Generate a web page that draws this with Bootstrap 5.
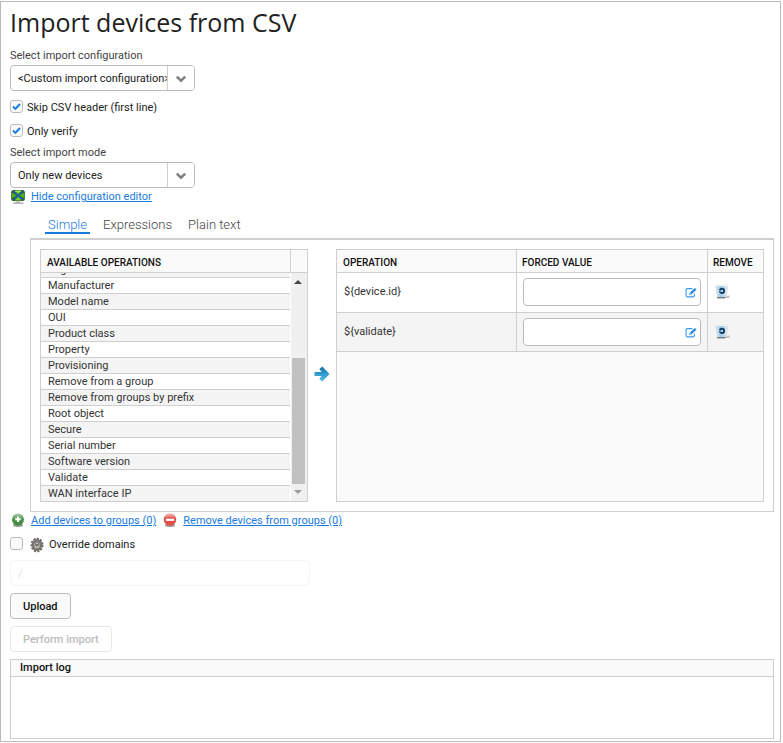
<!DOCTYPE html>
<html lang="en">
<head>
<meta charset="utf-8">
<meta name="viewport" content="width=device-width, initial-scale=1">
<title>Import devices from CSV</title>
<link href="https://cdn.jsdelivr.net/npm/bootstrap@5.3.0/dist/css/bootstrap.min.css" rel="stylesheet">
<style>
  :root { --line: #cfcfcf; --ink: #212121; --link: #1a7bdf; }
  body { font-family: Roboto, "Liberation Sans", sans-serif; font-size: 11px; line-height: 16px; color: var(--ink); background: #fff; }
  a { color: var(--link); }
  .page-frame { margin: 1px 2px 1px 0; border: 1px solid #bbb; padding: 2px 6px 2px 9px; }
  h1 { font-family: "Open Sans", sans-serif; font-size: 25px; line-height: 36px; font-weight: 400; margin-bottom: 8px; }
  .field-label { color: #444; margin-bottom: 1px; }
  .picker { width: 185px; }
  .picker select { width: 100%; height: 26px; padding: 1px 27px 0 7px; border: 1px solid #bbb; border-radius: 4px; appearance: none; background: #fff; color: var(--ink); font-size: 11px; overflow: hidden; }
  .picker-arrow { top: 1px; right: 1px; bottom: 1px; width: 27px; border-left: 1px solid var(--line); border-radius: 0 3px 3px 0; background: #fff; pointer-events: none; padding-top: 1px; }
  .check-row { gap: 4px; }
  .check-row label { padding-top: 1px; }
  .check-row .form-check-input { width: 13px; height: 13px; margin: 1px 0 0; border: 1px solid #bbb; border-radius: 3px; background-color: #fafafa; flex: none; }
  .check-row .form-check-input:checked { background-color: #fafafa; background-size: 11px 11px; background-image: url("data:image/svg+xml,%3Csvg xmlns='http://www.w3.org/2000/svg' viewBox='0 0 11 11'%3E%3Cpath d='M2 5.5l2.4 2.4L9 3' fill='none' stroke='%231a7bdf' stroke-width='2'/%3E%3C/svg%3E"); }
  .check-row .icon-label { gap: 5px; margin-left: 3px; }
  .gap-8 { margin-top: 8px; }
  .gap-7 { margin-top: 7px; }
  .gap-5 { margin-top: 5px; }
  .icon-row a { margin-left: 5px; padding-top: 2px; line-height: 14px; }
  .icon-row a + svg { margin-left: 6px; }
  .editor-tabs { margin: 12px 0 4px 35px; gap: 10px; }
  .editor-tabs button { border: 0; border-bottom: 2px solid transparent; background: none; padding: 2px 3px 0; font-size: 13px; font-weight: 300; line-height: 14px; color: #444; }
  .editor-tabs button.active { color: var(--link); border-color: var(--link); }
  .editor-pane { margin-left: 20px; border: 1px solid var(--line); border-top-width: 2px; padding: 9px; }
  .ops-box { width: 268px; height: 253px; border: 1px solid var(--line); }
  .box-head { height: 23px; border-bottom: 1px solid var(--line); background: #fafafa; font-weight: 500; color: #111; line-height: 25px; padding-left: 6px; font-size: 10px; }
  .box-head-end { width: 17px; height: 23px; border-left: 1px solid var(--line); border-bottom: 1px solid var(--line); background: #fafafa; }
  .ops-table td { height: 16px; padding: 0 0 0 7px; border-top: 1px solid var(--line); line-height: 15px; color: #333; }
  .ops-table tr:nth-child(odd) td { background: #f4f4f4; }
  .scroll-track { width: 16px; background: #f0f0f0; padding: 7px 2px 7px 0; }
  .scroll-thumb { width: 13px; height: 126px; background: #c1c1c1; margin-bottom: 6px; }
  .move-btn { width: 28px; border: 0; background: none; }
  .values-box { border: 1px solid var(--line); background: #fafafa; min-width: 0; }
  .values-table { table-layout: fixed; border-collapse: separate; border-spacing: 0; }
  .values-table th { height: 23px; padding: 4px 0 0 6px; font-size: 10px; font-weight: 500; line-height: 18px; color: #111; border-bottom: 1px solid var(--line); }
  .values-table th + th { padding-left: 5px; }
  .values-table td { padding: 5px 6px 6px; border-bottom: 1px solid var(--line); background: #fff; vertical-align: middle; color: #333; }
  .values-table tr:nth-child(even) td { background: #f4f4f4; padding-bottom: 5px; }
  .values-table th + th, .values-table td + td { border-left: 1px solid var(--line); }
  .col-forced { width: 191px; }
  .col-remove { width: 56px; }
  .values-table .op-name { padding-left: 7px; }
  .value-field { height: 28px; border: 1px solid #bbb; border-radius: 4px; background: #fff; padding-right: 3px; }
  .value-field input { border: 0; background: none; outline: 0; min-width: 0; font-size: 11px; }
  .value-field button, .values-table td > button { border: 0; background: none; padding: 0; line-height: 0; }
  .value-field button { padding-top: 1px; }
  .domain-input { width: 300px; height: 26px; border: 1px solid #f5f5f5; border-radius: 4px; background: #fefefe; color: #e4e4e4; padding: 0 7px; }
  .plain-btn { height: 26px; padding: 1px 12px 0; border: 1px solid #bbb; border-radius: 4px; background: #fafafa; font-size: 11px; font-weight: 500; line-height: 16px; color: #111; }
  .plain-btn:disabled { border-color: #e8e8e8; background: #fefefe; color: #bdbdbd; opacity: 1; }
  .log-box { border: 1px solid var(--line); height: 80px; }
  .log-box h2 { font-size: 11px; font-weight: 500; line-height: 16px; height: 17px; margin: 0; padding-left: 9px; background: #fafafa; border-bottom: 1px solid var(--line); color: #111; }
</style>
</head>
<body>
<svg width="0" height="0" class="position-absolute" aria-hidden="true">
  <defs>
    <linearGradient id="gGreen" x1="0" y1="0" x2="0" y2="1"><stop offset="0" stop-color="#a9cfa9"/><stop offset=".5" stop-color="#4b964b"/><stop offset="1" stop-color="#3f8440"/></linearGradient>
    <linearGradient id="gRed" x1="0" y1="0" x2="0" y2="1"><stop offset="0" stop-color="#f7c4c0"/><stop offset=".45" stop-color="#d9483f"/><stop offset="1" stop-color="#e2554d"/></linearGradient>
    <linearGradient id="gBlue" x1="0" y1="0" x2="0" y2="1"><stop offset="0" stop-color="#1c6d9c"/><stop offset=".5" stop-color="#2f9ad2"/><stop offset="1" stop-color="#62bbe8"/></linearGradient>
    <linearGradient id="gBin" x1="0" y1="0" x2="1" y2="0"><stop offset="0" stop-color="#dde6eb"/><stop offset=".45" stop-color="#9fcbe8"/><stop offset="1" stop-color="#e9eef1"/></linearGradient>
    <symbol id="chev" viewBox="0 0 12 8"><path d="M1.800 1.600l4.200 4 4.200-4" fill="none" stroke="#808080" stroke-width="2.600"/></symbol>
    <symbol id="edit" viewBox="0 0 12 12"><path d="M7.500 1.600H2.600Q1.100 1.600 1.100 3.100v5.300q0 1.500 1.500 1.500h5.300q1.500 0 1.500-1.500V6.800" fill="none" stroke="#3d96ec" stroke-width="1.100"/><path d="M4.300 8l.4-2.300L9.900.9l1.700 1.700-5.100 5z" fill="#2b8ae6"/><path d="M5.300 6.200l.9.900" stroke="#fff" stroke-width=".7"/></symbol>
    <symbol id="bin" viewBox="0 0 16 16"><path d="M9 14.300l6.500-.8v-2l-3.500.5z" fill="#b9b9b9"/><path d="M1.500 1h12.500l-1.800 12.500H3.500z" fill="url(#gBin)" stroke="#d9e0e4" stroke-width=".7"/><path d="M1.500 1.500H14" stroke="#f1f5f7"/><path d="M3 13.700h8.500" stroke="#777" stroke-width="1.400"/><circle cx="8" cy="6.900" r="2.100" fill="#b9def4" stroke="#123f63" stroke-width="1.900"/><path d="M5 6.500l2.200 1" stroke="#8fc0e0" stroke-width="1.100"/></symbol>
  </defs>
</svg>
<main class="page-frame">
  <h1>Import devices from CSV</h1>

  <label class="field-label d-block" for="cfg">Select import configuration</label>
  <div class="picker position-relative">
    <select id="cfg" class="d-block"><option>&lt;Custom import configuration&gt;</option></select>
    <span class="picker-arrow position-absolute d-flex align-items-center justify-content-center"><svg width="12" height="8"><use href="#chev"/></svg></span>
  </div>

  <div class="check-row d-flex gap-8"><input class="form-check-input" type="checkbox" id="skip" checked><label for="skip">Skip CSV header (first line)</label></div>
  <div class="check-row d-flex gap-7"><input class="form-check-input" type="checkbox" id="verify" checked><label for="verify">Only verify</label></div>

  <label class="field-label d-block gap-5" for="mode">Select import mode</label>
  <div class="picker position-relative">
    <select id="mode" class="d-block"><option>Only new devices</option></select>
    <span class="picker-arrow position-absolute d-flex align-items-center justify-content-center"><svg width="12" height="8"><use href="#chev"/></svg></span>
  </div>

  <div class="icon-row d-flex align-items-center">
    <svg width="16" height="16" viewBox="0 0 16 16" aria-hidden="true"><path d="M5.500 12h5v3h-5z" fill="#c9c9c9"/><path d="M3 15.200h10.500" stroke="#a8a8a8" stroke-width="1.300"/><rect x="1.200" y="2" width="13.600" height="11" rx="2.500" fill="#2c4f2b"/><path d="M4.500 2.500h7L8.500 7zM4.500 12.500h7L8.500 8z" fill="#6fd51c"/><path d="M1.800 4.500v6L7 7.500zM14.200 4.500v6L9 7.500z" fill="#49b31c"/><path d="M3 3l10 9M13 3L3 12" stroke="#235f9b" stroke-width="1.800"/><path d="M5 3.200h6" stroke="#c8f38b" stroke-width=".8"/></svg>
    <a href="#">Hide configuration editor</a>
  </div>

  <div class="editor-tabs d-flex" role="tablist">
    <button type="button" class="active" role="tab" aria-selected="true">Simple</button>
    <button type="button" role="tab">Expressions</button>
    <button type="button" role="tab">Plain text</button>
  </div>

  <section class="editor-pane d-flex">
    <div class="ops-box d-flex flex-shrink-0">
      <div class="d-flex flex-column flex-grow-1">
        <div class="box-head flex-shrink-0">AVAILABLE OPERATIONS</div>
        <div class="d-flex flex-column justify-content-end flex-grow-1 overflow-hidden h-0">
          <table class="ops-table w-100" aria-label="Available operations">
            <tbody>
              <tr><td>Log</td></tr>
              <tr><td>Manufacturer</td></tr>
              <tr><td>Model name</td></tr>
              <tr><td>OUI</td></tr>
              <tr><td>Product class</td></tr>
              <tr><td>Property</td></tr>
              <tr><td>Provisioning</td></tr>
              <tr><td>Remove from a group</td></tr>
              <tr><td>Remove from groups by prefix</td></tr>
              <tr><td>Root object</td></tr>
              <tr><td>Secure</td></tr>
              <tr><td>Serial number</td></tr>
              <tr><td>Software version</td></tr>
              <tr><td>Validate</td></tr>
              <tr><td>WAN interface IP</td></tr>
            </tbody>
          </table>
        </div>
      </div>
      <div class="d-flex flex-column align-items-end">
        <div class="box-head-end flex-shrink-0"></div>
        <div class="scroll-track d-flex flex-column align-items-center flex-grow-1" aria-hidden="true">
          <svg width="8" height="4" viewBox="0 0 8 4"><path d="M0 4l4-4 4 4z" fill="#444"/></svg>
          <div class="scroll-thumb mt-auto"></div>
          <svg width="8" height="4" viewBox="0 0 8 4"><path d="M0 0l4 4 4-4z" fill="#999"/></svg>
        </div>
      </div>
    </div>

    <button type="button" class="move-btn px-0 pt-0 pb-1 flex-shrink-0" aria-label="Add operation">
      <svg width="16" height="16" viewBox="0 0 16 16"><path d="M.5 6h7L5.300 3 8.300.500 15.500 8l-7.200 7.500L5.300 13l2.200-3h-7z" fill="url(#gBlue)"/></svg>
    </button>

    <div class="values-box flex-grow-1">
      <table class="values-table w-100">
        <colgroup><col><col class="col-forced"><col class="col-remove"></colgroup>
        <thead><tr><th>OPERATION</th><th>FORCED VALUE</th><th>REMOVE</th></tr></thead>
        <tbody>
          <tr>
            <td class="op-name">${device.id}</td>
            <td><div class="value-field d-flex align-items-center"><input class="flex-grow-1" type="text" aria-label="Forced value for device.id"><button type="button" aria-label="Edit"><svg width="12" height="12"><use href="#edit"/></svg></button></div></td>
            <td><button type="button" aria-label="Remove"><svg width="16" height="16"><use href="#bin"/></svg></button></td>
          </tr>
          <tr>
            <td class="op-name">${validate}</td>
            <td><div class="value-field d-flex align-items-center"><input class="flex-grow-1" type="text" aria-label="Forced value for validate"><button type="button" aria-label="Edit"><svg width="12" height="12"><use href="#edit"/></svg></button></div></td>
            <td><button type="button" aria-label="Remove"><svg width="16" height="16"><use href="#bin"/></svg></button></td>
          </tr>
        </tbody>
      </table>
    </div>
  </section>

  <div class="icon-row d-flex align-items-center">
    <svg width="16" height="16" viewBox="0 0 16 16" aria-hidden="true"><ellipse cx="8" cy="13.300" rx="5" ry="1.700" fill="#8f978f"/><circle cx="8" cy="7.500" r="6" fill="url(#gGreen)"/><path d="M8 4.500v5.600M5.200 7.300h5.600" stroke="#fff" stroke-width="2"/></svg>
    <a href="#">Add devices to groups (0)</a>
    <svg width="16" height="16" viewBox="0 0 16 16" aria-hidden="true"><ellipse cx="8" cy="13.300" rx="5" ry="1.700" fill="#a58f8f"/><circle cx="8" cy="7.500" r="6.200" fill="url(#gRed)"/><path d="M3.800 7.800h8.400" stroke="#fff" stroke-width="2.200"/></svg>
    <a href="#">Remove devices from groups (0)</a>
  </div>

  <div class="check-row d-flex gap-8">
    <input class="form-check-input" type="checkbox" id="override">
    <label for="override" class="icon-label d-flex"><svg width="14" height="16" viewBox="0 0 14 16" aria-hidden="true"><ellipse cx="7" cy="8" rx="5.600" ry="6.400" fill="none" stroke="#6f6b67" stroke-width="1.800" stroke-dasharray="2.200 1.200"/><ellipse cx="7" cy="8" rx="4" ry="4.800" fill="#b9b6b2" stroke="#77726d" stroke-width="2.400"/><circle cx="7" cy="7" r="1.900" fill="#555"/><circle cx="7" cy="6.600" r=".9" fill="#eee"/></svg>Override domains</label>
  </div>

  <input class="domain-input d-block gap-7" type="text" value="/" aria-label="Domain" disabled>
  <button type="button" class="plain-btn d-block gap-7">Upload</button>
  <button type="button" class="plain-btn d-block gap-7" disabled>Perform import</button>

  <section class="log-box gap-7"><h2>Import log</h2></section>
</main>
<script src="https://cdn.jsdelivr.net/npm/bootstrap@5.3.0/dist/js/bootstrap.bundle.min.js"></script>
</body>
</html>
